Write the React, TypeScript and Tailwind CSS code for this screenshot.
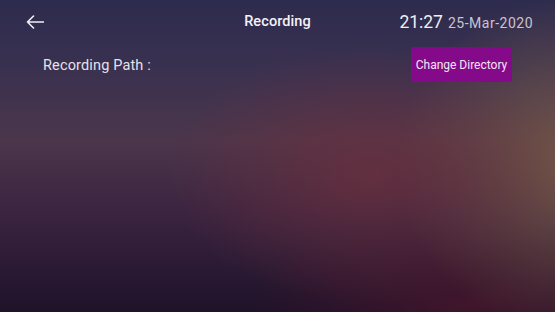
import React from "react";

export default function App() {
  return (
    <div
      className="relative w-[555px] h-[312px] overflow-hidden text-white bg-[radial-gradient(ellipse_200px_130px_at_370px_175px,rgba(112,48,60,0.7),rgba(112,48,60,0)),radial-gradient(ellipse_180px_170px_at_575px_165px,rgba(122,92,70,0.85),rgba(122,92,70,0)),radial-gradient(ellipse_220px_90px_at_470px_305px,rgba(72,22,44,0.8),rgba(72,22,44,0)),linear-gradient(180deg,#2d2b4e_0%,#3a3150_22%,#4b364b_45%,#3b2440_68%,#1e1229_100%)]"
      style={{ fontFamily: "Roboto, 'Noto Sans', sans-serif" }}
    >
      <div className="grid grid-cols-[1fr_auto_1fr] items-center h-[44px] px-[22px]">
        <div className="flex items-center pl-[4px]">
          <svg width="18" height="14" viewBox="0 0 18 14" fill="none">
            <path d="M17.5 7H1.5M7.5 1L1.5 7L7.5 13" stroke="#f2f0f4" strokeWidth="1.6" strokeLinecap="round" strokeLinejoin="round" />
          </svg>
        </div>
        <span className="text-[14.5px] font-medium text-[#f4f2f6] tracking-[0.1px]">Recording</span>
        <div className="flex items-baseline justify-end gap-[5px]">
          <span className="text-[17.5px] text-[#f0eef2]">21:27</span>
          <span className="text-[14px] text-[#c9c4cf] tracking-[0.5px]">25-Mar-2020</span>
        </div>
      </div>
      <div className="flex items-center justify-between pl-[43px] pr-[43px] mt-[3px]">
        <span className="text-[14.5px] text-[#e6e2ea] tracking-[0.15px] pt-[3px]">Recording Path :</span>
        <button className="w-[101px] h-[35px] rounded-[3px] bg-[#850a8a] text-[12px] text-[#f3e6f3] flex items-center justify-center">
          Change Directory
        </button>
      </div>
    </div>
  );
}
